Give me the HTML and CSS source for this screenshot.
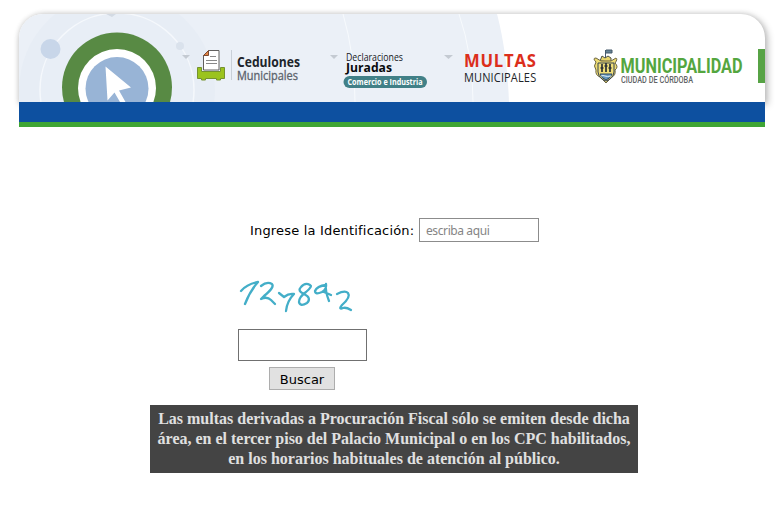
FILE: index.html
```html
<!DOCTYPE html>
<html lang="es">
<head>
<meta charset="utf-8">
<title>Multas Municipales</title>
<link rel="stylesheet" href="styles.css">
</head>
<body>
<header class="banner">
  <div class="panel">
    <svg class="art" viewBox="19 14 746 88" aria-hidden="true">
      <path d="M19 14H497Q507 52 509 102H19Z" fill="#ebf0f7"/>
      <circle cx="117" cy="90" r="98" fill="#e7edf5"/>
      <circle cx="117" cy="90" r="77" fill="#e8eef6" stroke="#f5f8fc" stroke-width="1.5"/>
      <path d="M343 14Q355 55 355 102M459 14Q473 55 473 102" fill="none" stroke="#f7fafd" stroke-width="1"/>
      <circle cx="50.500" cy="49" r="10" fill="#c8d6e9"/>
      <circle cx="180" cy="46" r="4" fill="#dae2ec"/>
      <path d="M106 14h10l-4 3z" fill="#d3dae3"/>
      <circle cx="117" cy="87.500" r="55" fill="#588a44"/>
      <circle cx="117" cy="88" r="39" fill="#fff"/>
      <circle cx="117" cy="88.500" r="31.500" fill="#98b4d6"/>
      <path d="M105.500 66.500L131 87.500L119 90.500L125.500 102H120L114.500 92.500L107.500 100.500Z" fill="#fff"/>
    </svg>
    <nav class="items">
      <svg class="cedulones" viewBox="182 14 148 88">
        <path d="M182 55h8l-4 4z" fill="#c4cad2"/>
        <path d="M197.500 67.500h4v4h19v-4h4v11h-4v1.500h-4v-1.500h-11v1.500h-4v-1.500h-4z" fill="#9bc31d" stroke="#75922f"/>
        <path d="M208.500 50.500h10.500v19.500h-15.500v-14.500z" fill="#fff" stroke="#62605f"/>
        <path d="M208.500 50.500v5h-5z" fill="#e28445" stroke="#7c4a32"/>
        <path d="M210 56.500h6M206 60.500h11M206 63.500h11" stroke="#888"/>
        <path d="M231.500 50v30" stroke="#c9d0d8"/>
        <text x="237" y="67" class="narrow heavy" font-size="13.500" fill="#20242a" textLength="63" lengthAdjust="spacingAndGlyphs">Cedulones</text>
        <text x="237" y="80" class="narrow" font-size="12" fill="#5b626b" stroke="#5b626b" stroke-width=".3" textLength="61" lengthAdjust="spacingAndGlyphs">Municipales</text>
      </svg>
      <svg class="declaraciones" viewBox="330 14 114 88">
        <path d="M330 55h8l-4 4z" fill="#c4cad2"/>
        <text x="346" y="60.500" class="narrow" font-size="10.500" fill="#16191d" textLength="57" lengthAdjust="spacingAndGlyphs">Declaraciones</text>
        <text x="346" y="72" class="narrow heavy" font-size="13" fill="#080a0c" textLength="46" lengthAdjust="spacingAndGlyphs">Juradas</text>
        <rect x="343.500" y="76" width="83.500" height="12" rx="6" fill="#418087"/>
        <text x="347.500" y="85" class="narrow heavy" font-size="8.500" fill="#fff" textLength="75" lengthAdjust="spacingAndGlyphs">Comercio e Industria</text>
      </svg>
      <svg class="multas" viewBox="444 14 146 88">
        <path d="M444 55h9l-4.500 4z" fill="#c4cad2"/>
        <text transform="translate(464 66.500) scale(.9 1)" class="narrow heavy" font-size="18.500" fill="#dc2e1b" textLength="80" lengthAdjust="spacing">MULTAS</text>
        <text transform="translate(464 81.500) scale(.88 1)" class="narrow" font-size="12.500" fill="#202327" textLength="82" lengthAdjust="spacing">MUNICIPALES</text>
      </svg>
      <svg class="municipalidad" viewBox="590 14 168 88">
        <path d="M605.500 61V50M606 50h6v3h-6" fill="#668496" stroke="#45596a"/>
        <path d="M600 61l2-5 3 2 3-2 3 2v4z" fill="#e9d66b" stroke="#4c5148"/>
        <path d="M596 62q-4-4 0-4l5 3h10l5-3q2 1-1 5 4 4 0 7 1 5-3 7l-6 6-6-6q-5-2-4-7-3-4 0-8z" fill="#efdd72" stroke="#6c6544"/>
        <path d="M598 63h16v9q-1 7-8 9-7-2-8-9z" fill="#f0de78" stroke="#354252"/>
        <path d="M600 74h12q-1 4-6 6-5-2-6-6z" fill="#6697bd" stroke="#304962"/>
        <path d="M602 64v8M606 63v9M610 64v8M600.500 68h3M604.500 66h3M608.500 68h3" stroke="#2a3036" stroke-width="1.700"/>
        <path d="M601 76q2-1 4 0t6 0" fill="none" stroke="#dcebf3"/>
        <text x="620.500" y="73" class="logo" font-size="20" fill="#54a63f" textLength="122" lengthAdjust="spacingAndGlyphs">MUNICIPALIDAD</text>
        <text x="621" y="83" class="logo small" font-size="9" fill="#606365" textLength="72" lengthAdjust="spacingAndGlyphs">CIUDAD DE CÓRDOBA</text>
      </svg>
      <span class="tab"></span>
    </nav>
  </div>
  <div class="stripe"></div>
</header>
<main class="content">
  <form class="search">
    <div class="row">
      <label for="ident">Ingrese la Identificación:</label>
      <input id="ident" class="ident" type="text" placeholder="escriba aqui">
    </div>
    <div class="verify">
      <svg class="captcha" viewBox="238 276 120 40" role="img" aria-label="127842">
        <g fill="none" stroke="#43aec8" stroke-width="2.300" stroke-linecap="round" stroke-linejoin="round">
          <path d="M241 291Q247 284 258 282Q250 291 245 304"/>
          <path d="M261 286Q267 281 272 284Q275 287 264 296L261 299Q267 296 271 300L275 304"/>
          <path d="M279 293L284 297Q289 293 294 294Q287 301 286 311"/>
          <path d="M310 285Q305 282 301 287Q297 291 304 294Q312 298 307 303Q300 307 299 302Q299 297 306 292Q313 286 310 285"/>
          <path d="M326 285Q317 286 315 291Q315 295 322 292Q327 289 326 284Q325 291 329 301M324 292L331 295"/>
          <path d="M337 294Q345 290 348 293Q351 297 342 305Q338 310 343 308Q346 307 351 310"/>
        </g>
      </svg>
      <input class="code" type="text" aria-label="Código">
      <button type="button" class="submit">Buscar</button>
    </div>
  </form>
  <p class="notice">Las multas derivadas a Procuración Fiscal sólo se emiten desde dicha<br>área, en el tercer piso del Palacio Municipal o en los CPC habilitados,<br>en los horarios habituales de atención al público.</p>
</main>
</body>
</html>
```
FILE: styles.css
```css
* { box-sizing: border-box; }
body {
  margin: 0;
  background: #fff;
  color: #000;
  font: 13px "DejaVu Sans", Verdana, sans-serif;
  overflow: hidden;
}
.banner { width: 746px; margin-left: 19px; padding-top: 14px; }
.panel {
  position: relative;
  height: 88px;
  border-radius: 24px 24px 0 0;
  background: #fff;
  box-shadow: 2px 2px 7px 1px rgba(0, 0, 0, .24), 0 0 4px 1px rgba(0, 0, 0, .08);
}
.art {
  position: absolute;
  inset: 0;
  width: 746px;
  height: 88px;
  border-radius: 24px 24px 0 0;
}
.items { position: relative; display: flex; padding-left: 163px; }
.items svg { display: block; height: 88px; flex: none; }
.cedulones { width: 148px; }
.declaraciones { width: 114px; }
.multas { width: 146px; }
.municipalidad { width: 168px; }
.narrow { font-family: "Open Sans", "Noto Sans", sans-serif; }
.heavy { font-weight: 700; }
.logo { font-family: Roboto, sans-serif; font-weight: 700; }
.small { font-weight: 500; }
.tab { width: 7px; height: 34px; margin-top: 35px; background: #57a345; }
.stripe {
  position: relative;
  height: 25px;
  background: #0d50a0;
  border-bottom: 5px solid #3fa535;
}
.content { padding-top: 91px; }
.row { display: flex; align-items: center; gap: 5px; padding-left: 250px; }
.row label { width: 164px; white-space: nowrap; letter-spacing: .18px; }
.ident {
  width: 120px;
  height: 24px;
  padding: 0 6px;
  border: 1px solid #8c8c8c;
  font: 12px "Noto Sans", sans-serif;
  letter-spacing: -.4px;
}
.ident::placeholder { color: #858585; opacity: 1; }
.verify {
  display: flex;
  flex-direction: column;
  width: 129px;
  margin: 34px 0 0 238px;
}
.captcha { width: 120px; height: 40px; }
.code { width: 129px; height: 32px; margin-top: 13px; border: 1px solid #707070; }
.submit {
  width: 66px;
  height: 23px;
  margin: 6px 0 0 31px;
  padding: 1px 0 0;
  border: 1px solid #adadad;
  background: #e1e1e1;
  color: #000;
  font: 13px "DejaVu Sans", Verdana, sans-serif;
}
.notice {
  width: 488px;
  height: 68px;
  margin: 15px 0 0 150px;
  padding: 4px 0;
  background: #444;
  color: #e0e0e0;
  font: bold 16px/20px "Liberation Serif", serif;
  text-align: center;
  white-space: nowrap;
}
```
